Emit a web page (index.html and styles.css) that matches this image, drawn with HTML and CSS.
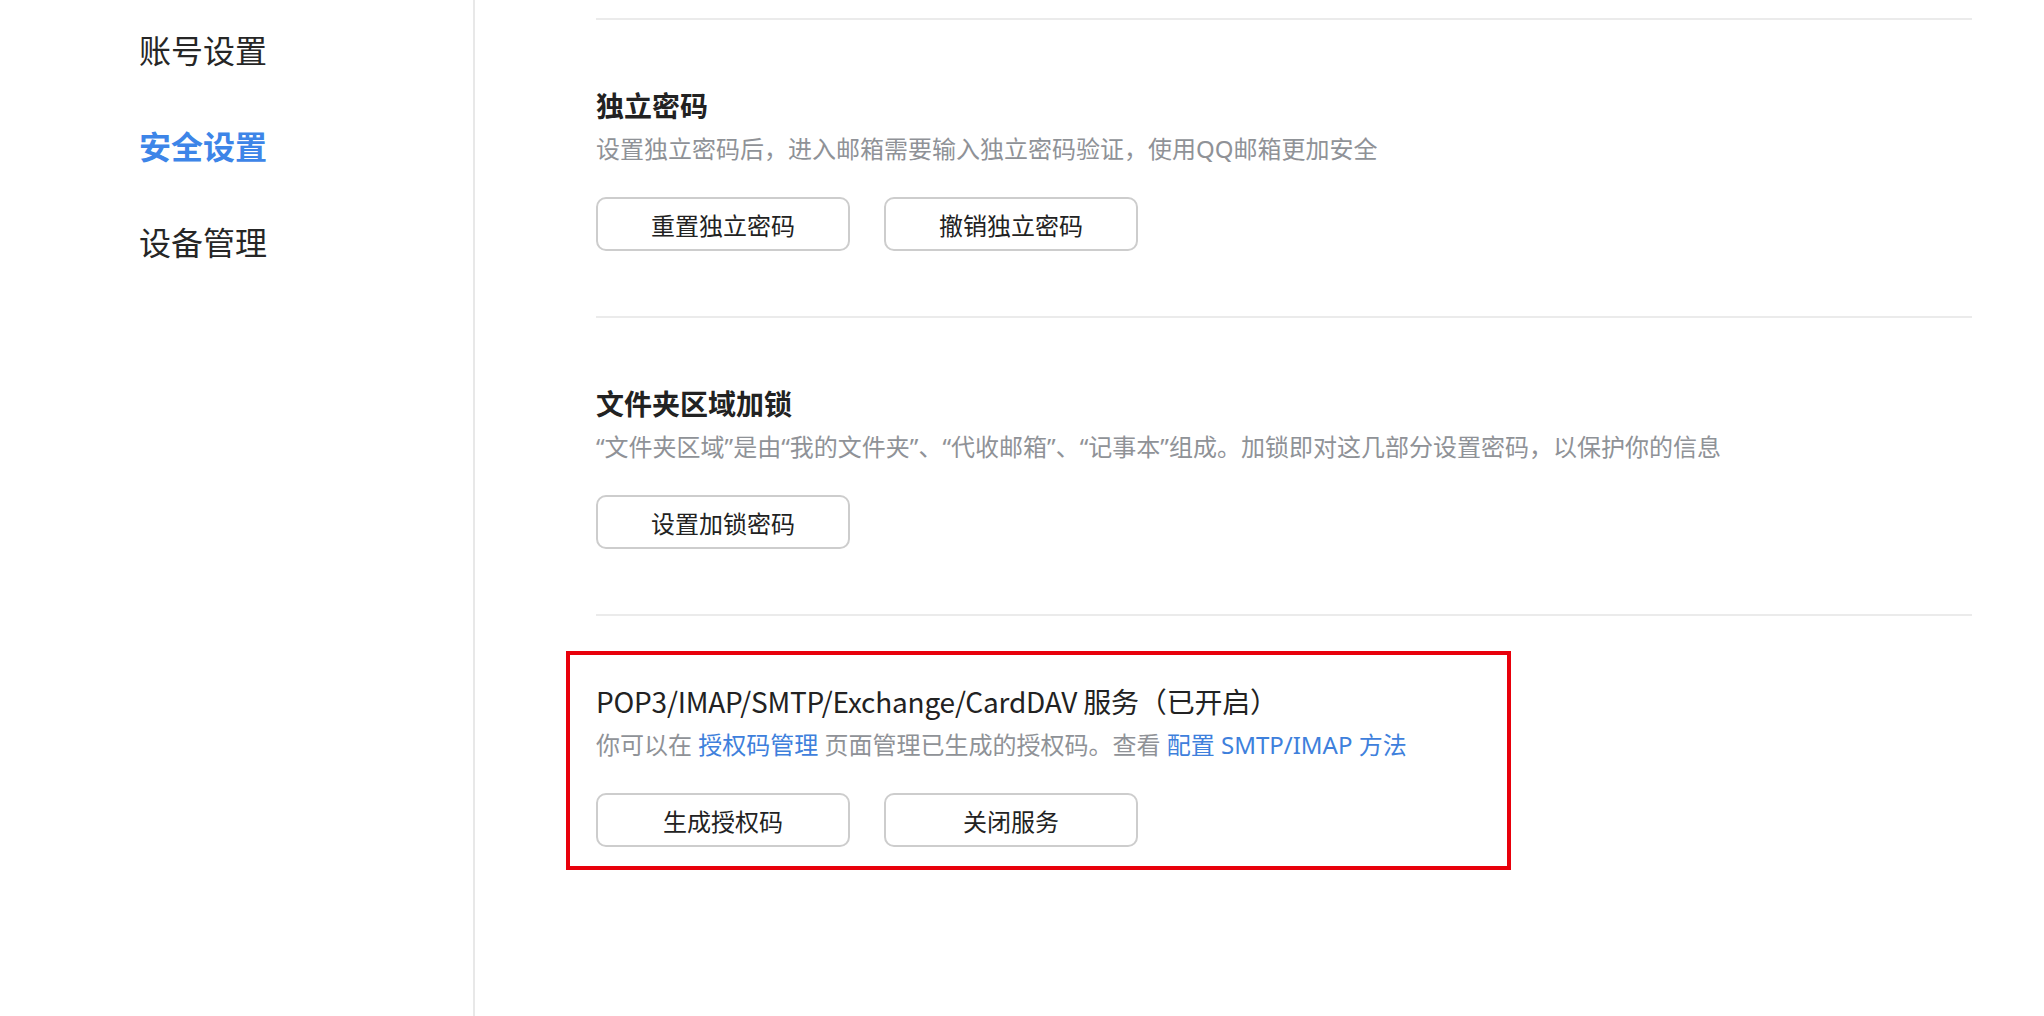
FILE: index.html
```html
<!DOCTYPE html>
<html lang="zh-CN">
<head>
<meta charset="utf-8">
<title>安全设置</title>
<link rel="stylesheet" href="styles.css">
</head>
<body>
<div class="page">
  <aside class="sidebar">
    <nav class="nav">
      <div class="nav-item">账号设置</div>
      <div class="nav-item active">安全设置</div>
      <div class="nav-item">设备管理</div>
    </nav>
  </aside>
  <main class="content">
    <section class="section">
      <h2 class="title">独立密码</h2>
      <p class="desc">设置独立密码后，进入邮箱需要输入独立密码验证，使用QQ邮箱更加安全</p>
      <div class="actions">
        <button class="btn">重置独立密码</button>
        <button class="btn">撤销独立密码</button>
      </div>
    </section>
    <section class="section">
      <h2 class="title">文件夹区域加锁</h2>
      <p class="desc">“文件夹区域”是由“我的文件夹”、“代收邮箱”、“记事本”组成。加锁即对这几部分设置密码，以保护你的信息</p>
      <div class="actions">
        <button class="btn">设置加锁密码</button>
      </div>
    </section>
    <section class="section section-marked">
      <div class="marked">
        <h2 class="title title-latin">POP3/IMAP/SMTP/Exchange/CardDAV 服务（已开启）</h2>
        <p class="desc">你可以在 <a class="link">授权码管理</a> 页面管理已生成的授权码。查看 <a class="link">配置 SMTP/IMAP 方法</a></p>
        <div class="actions">
          <button class="btn">生成授权码</button>
          <button class="btn">关闭服务</button>
        </div>
      </div>
    </section>
  </main>
</div>
</body>
</html>
```
FILE: styles.css
```css
* { box-sizing: border-box; }
html, body {
  margin: 0;
  padding: 0;
  background: #ffffff;
}
body {
  font-family: "Noto Sans CJK SC", "Noto Sans", sans-serif;
  color: #222222;
}
.page {
  display: flex;
  min-height: 100vh;
}
.sidebar {
  width: 475px;
  flex: none;
  border-right: 2px solid #e8e8e8;
}
.nav {
  padding-top: 1px;
  padding-left: 139px;
}
.nav-item {
  height: 96px;
  line-height: 96px;
  font-size: 32px;
  color: #262626;
}
.nav-item.active {
  color: #3d85e8;
  font-weight: 700;
}
.content {
  padding-left: 121px;
  padding-top: 18px;
  width: 1497px;
}
.section {
  border-top: 2px solid #ebebeb;
  padding-top: 63px;
  padding-bottom: 65px;
}
.title {
  margin: 0;
  font-size: 28px;
  line-height: 44px;
  font-weight: 700;
  color: #222222;
}
.title-latin {
  font-weight: 400;
  letter-spacing: -0.2px;
}
.desc {
  margin: 0;
  font-family: "Noto Sans", "Noto Sans CJK SC", sans-serif;
  font-size: 24px;
  line-height: 44px;
  color: #8f9297;
}
.link {
  color: #3e80dc;
  text-decoration: none;
}
.actions {
  display: flex;
  gap: 34px;
  margin-top: 26px;
}
.btn {
  width: 254px;
  height: 54px;
  border: 2px solid #cdcdcd;
  border-radius: 10px;
  background: #ffffff;
  font-family: "Noto Sans CJK SC", sans-serif;
  font-size: 24px;
  color: #222222;
  padding: 0;
}
.section-marked {
  padding-top: 35px;
}
.marked {
  width: 945px;
  margin-left: -30px;
  border: 4px solid #e8000b;
  padding: 24px 26px 19px 26px;
}
```
